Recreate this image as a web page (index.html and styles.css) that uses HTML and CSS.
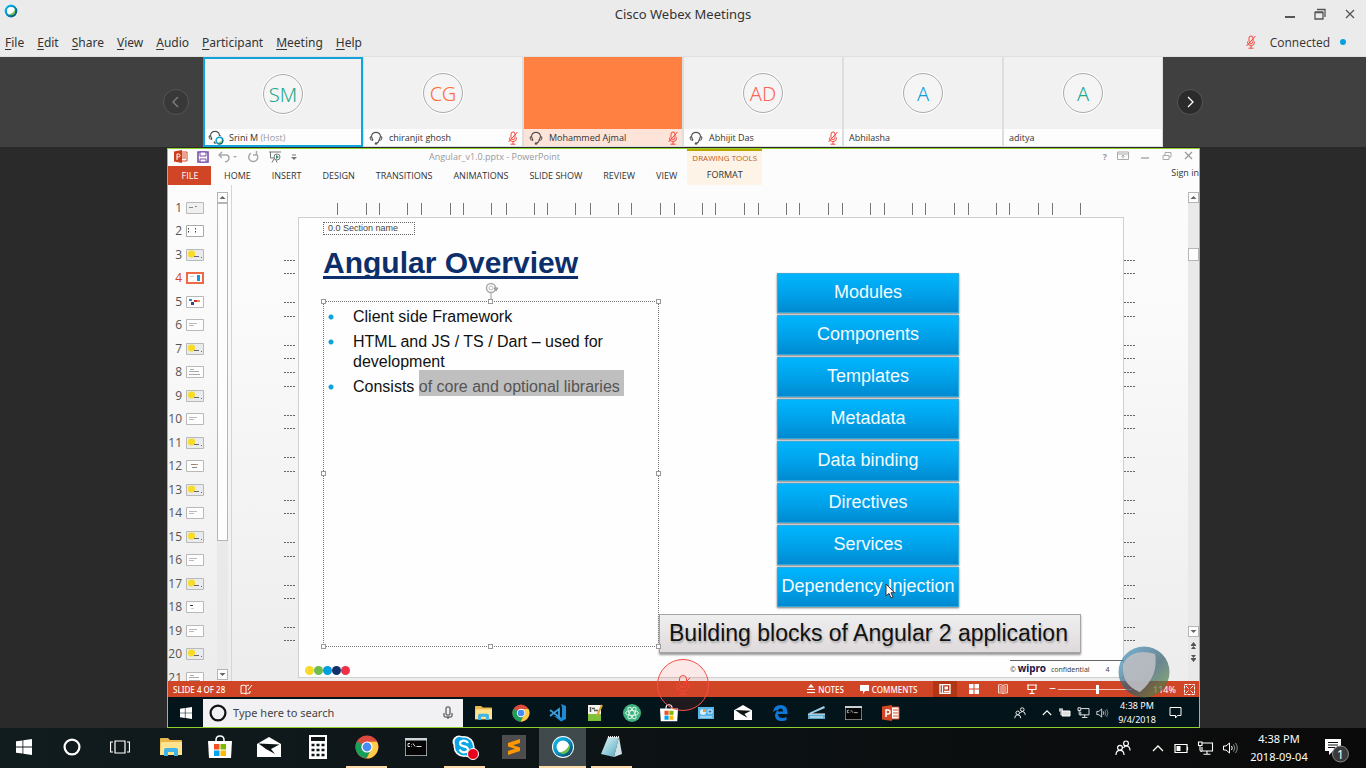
FILE: index.html
```
<!DOCTYPE html>
<html lang="en">
<head>
<meta charset="utf-8">
<title>Cisco Webex Meetings</title>
<link rel="stylesheet" href="styles.css">
</head>
<body>
<svg class="defs" aria-hidden="true">
  <defs>
    <linearGradient id="ring" x1="0" y1="0" x2="1" y2="1"><stop offset="0" stop-color="#0fc3f0"/><stop offset=".5" stop-color="#0a8fc0"/><stop offset="1" stop-color="#063c4c"/></linearGradient>
    <linearGradient id="pad" x1="0" y1="0" x2="1" y2="1"><stop offset="0" stop-color="#e8f8fb"/><stop offset="1" stop-color="#4fa7bd"/></linearGradient>
    <symbol id="webex" viewBox="0 0 24 24"><circle cx="12" cy="12" r="12" fill="#fff"/><circle cx="12" cy="12" r="11" fill="url(#ring)"/><circle cx="12" cy="12" r="7" fill="#fff"/><path d="M18.6 9.5A7 7 0 0 1 8 17.800C14 17 17 14 18.600 9.500z" fill="#6cc04a"/></symbol>
    <symbol id="headset" viewBox="0 0 14 14"><path d="M4 9.500C.5 9.500.5 5.500 2.500 5.500 3 0 11 0 11.500 5.500c2 0 2 4-1.500 4M2.500 5.500l1.500 4M11.500 5.500l-1.500 4q-.5 2-2.500 3" fill="none" stroke="#555" stroke-width="1.100"/><circle cx="7" cy="12.500" r="1.300" fill="#555"/></symbol>
    <symbol id="micoff" viewBox="0 0 12 14"><rect x="4" y="1" width="4" height="7.500" rx="2" fill="none" stroke="currentColor"/><path d="M2.500 6.500v1q0 3 3.500 3t3.500-3v-1M6 10.500V13M3.500 13.200h5M10.500 1 1.500 11" fill="none" stroke="currentColor"/></symbol>
    <symbol id="micthin" viewBox="0 0 18 22"><rect x="5.500" y="1.500" width="7" height="12" rx="3.500" fill="none" stroke="currentColor"/><path d="M3 9v3q0 5 6 5t6-5V9M9 17v3.500M5.500 20.500h7M16 4 2 17" fill="none" stroke="currentColor"/></symbol>
    <symbol id="win" viewBox="0 0 16 16"><path d="M0 2.300 6.500 1.400V7.600H0zM7.300 1.300 16 0v7.600H7.300zM0 8.400h6.500v6.200L0 13.700zM7.300 8.400H16V16l-8.700-1.300z" fill="#fff"/></symbol>
    <symbol id="ring-o" viewBox="0 0 16 16"><circle cx="8" cy="8" r="6.600" fill="none" stroke="currentColor" stroke-width="2"/></symbol>
    <symbol id="folder" viewBox="0 0 22 18"><path d="M0 1q0-1 1-1h7l2 2h11q1 0 1 1v14H0z" fill="#e9b84d"/><path d="M1 4h21v13H0z" fill="#ffe38f"/><path d="M4 18v-6q0-2 2-2h10q2 0 2 2v6h-4v-4H8v4z" fill="#3fb4e8"/></symbol>
    <symbol id="store" viewBox="0 0 24 24"><path d="M8 7V5q0-4 4-4t4 4v2" fill="none" stroke="#fff" stroke-width="1.500"/><path d="M0 6h24l-1 17H1z" fill="#fff"/><path d="M6 9h5.500v5.500H6z" fill="#f25022"/><path d="M12.500 9H18v5.500h-5.500z" fill="#7fba00"/><path d="M6 15.500h5.500V21H6z" fill="#00a4ef"/><path d="M12.500 15.500H18V21h-5.500z" fill="#ffb900"/></symbol>
    <symbol id="mail" viewBox="0 0 24 20"><path d="M0 7 12 0l12 7v13H0z" fill="#fff"/><path d="M1.500 6.500 22.500 7.500 14 12l4 5-9-5z" fill="#0c1416"/></symbol>
    <symbol id="chrome" viewBox="0 0 24 24"><circle cx="12" cy="12" r="11.500" fill="#dd4b3e"/><path d="M2 6.300A11.500 11.500 0 0 0 11 23.500L16.500 14 12 12z" fill="#1a9f5a"/><path d="M11.500 23.500A11.500 11.500 0 0 0 22 6.700H12l4.500 7.300z" fill="#fdcd45"/><circle cx="12" cy="12" r="5.600" fill="#fff"/><circle cx="12" cy="12" r="4.400" fill="#4a8af4"/></symbol>
    <symbol id="cmd" viewBox="0 0 22 18"><path d="M0 0h22v18H0z" fill="#cfd4d6"/><path d="M.7 2.500h20.600v14.800H.700z" fill="#050505"/><path d="M3 5.500h2M3 5.500v3h2M6.500 6v.6M6.500 8v.6M8 5.500l2 3M11.500 8.500h5" stroke="#ddd" fill="none"/></symbol>
    <symbol id="people" viewBox="0 0 16 16"><g fill="none" stroke="#fff" stroke-width="1.200"><circle cx="5" cy="7.800" r="2.400"/><path d="M1 15q0-4.600 4-4.600T9 15"/><circle cx="11" cy="3.400" r="2.400"/><path d="M8.500 8Q9.500 6 11 6q4 0 4 4.500"/></g></symbol>
    <symbol id="up" viewBox="0 0 12 8"><path d="m1 7 5-5 5 5" fill="none" stroke="#fff" stroke-width="1.300"/></symbol>
    <symbol id="net" viewBox="0 0 16 14"><path d="M5 2h10v8H4.500V6M9.500 10v3M6 13.300h7M1 1h3.500v3.500H1zM2.500 4.500V9q0 1.500 2 1.500" fill="none" stroke="#fff" stroke-width="1.100"/></symbol>
    <symbol id="vol" viewBox="0 0 16 14"><path d="M1 5h2.500L7 2v10L3.500 9H1zM9 5q1.500 2 0 4" fill="none" stroke="#fff"/><path d="M11 3.500q2.500 3.500 0 7M13 2q3.500 5 0 10" fill="none" stroke="#8a9093"/></symbol>
    <symbol id="t-line" viewBox="0 0 18 12"><path d="M.5.500h17v11H.500z" fill="#fdfdfd" stroke="#b9b9b9"/><path d="M3 4.500h8M3 6.500h5" stroke="#bbb"/></symbol>
    <symbol id="t-text" viewBox="0 0 18 12"><path d="M.5.500h17v11H.500z" fill="#fdfdfd" stroke="#b9b9b9"/><path d="M4 3.500h4M3 5.500h10M3 8.500h11" stroke="#aaa"/></symbol>
    <symbol id="t-title" viewBox="0 0 18 12"><path d="M.5.500h17v11H.500z" fill="#eef0f1" stroke="#b9b9b9"/><path d="M3 5.500h4M9 4.500h2" stroke="#888"/></symbol>
    <symbol id="t-mid" viewBox="0 0 18 12"><path d="M.5.500h17v11H.500z" fill="#fdfdfd" stroke="#b9b9b9"/><path d="M5 4.500h6M6 7.500h5" stroke="#888"/><path d="M10 4.500h2" stroke="#e8903a"/></symbol>
    <symbol id="t-short" viewBox="0 0 18 12"><path d="M.5.500h17v11H.500z" fill="#fdfdfd" stroke="#b9b9b9"/><path d="M4 4.500h3" stroke="#333"/><path d="M5 7.500h3" stroke="#ccc"/></symbol>
    <symbol id="t-sun" viewBox="0 0 18 12"><path d="M.5.500h17v11H.500z" fill="#e9ebec" stroke="#b9b9b9"/><rect x="2" y="1.500" width="7" height="7" rx="3" fill="#f7dc2b"/><path d="M8 7.500h5M15 8.500h1" stroke="#667"/></symbol>
    <symbol id="t-dots" viewBox="0 0 18 12"><path d="M.5.500h17v11H.500z" fill="#fff" stroke="#aaa"/><path d="M2.500 3v6M9.500 3v6" stroke="#444" stroke-dasharray="1.500 1.500"/></symbol>
    <symbol id="t-blue" viewBox="0 0 18 12"><path d="M1 1h16v10H1z" fill="#fff" stroke="#ed6a47" stroke-width="2"/><path d="M4 4.500h4" stroke="#ccc"/><path d="M11 3h3v6h-3z" fill="#1599dc"/></symbol>
    <symbol id="t-chart" viewBox="0 0 18 12"><path d="M.5.500h17v11H.500z" fill="#fff" stroke="#b9b9b9"/><path d="M3 3h3v2H3z" fill="#2a8ac9"/><path d="M5 6h3v3H5z" fill="#344a80"/><path d="M8 4h3v2H8z" fill="#c33"/><path d="M11 4h3v2h-3z" fill="#e8903a"/></symbol>
    <symbol id="rulerv" viewBox="0 0 12 400"><path d="M0 9.500h12M0 22.500h12M0 51.500h12M0 65.500h12M0 94.500h12M0 107.500h12M0 121.500h12M0 135.500h12M0 164.500h12M0 177.500h12M0 206.500h12M0 220.500h12M0 249.500h12M0 262.500h12M0 291.500h12M0 305.500h12M0 334.500h12M0 347.500h12M0 376.500h12M0 389.500h12" stroke="#666" stroke-dasharray="2 1"/></symbol>
    <symbol id="arr-u" viewBox="0 0 9 9"><path d="M4.500 3 7.500 6h-6z" fill="#666"/></symbol>
    <symbol id="arr-d" viewBox="0 0 9 9"><path d="M4.500 6 7.500 3h-6z" fill="#666"/></symbol>
  </defs>
</svg>

<div class="app">
  <header class="titlebar">
    <svg class="i14"><use href="#webex"/></svg>
    <h1>Cisco Webex Meetings</h1>
    <div class="winbtns">
      <button aria-label="Minimize"><svg width="12" height="12"><path d="M1 9h10" stroke="#555" stroke-width="2"/></svg></button>
      <button aria-label="Restore"><svg width="12" height="12"><path d="M1 4.500h8v6.500H1zM1 4h8M3 1.500h8V9" fill="none" stroke="#555" stroke-width="1.300"/></svg></button>
      <button aria-label="Close"><svg width="12" height="12"><path d="m2 2 8 8m0-8-8 8" stroke="#555" stroke-width="1.300"/></svg></button>
    </div>
  </header>
  <nav class="menubar">
    <button><u>F</u>ile</button><button><u>E</u>dit</button><button><u>S</u>hare</button><button><u>V</u>iew</button><button><u>A</u>udio</button><button><u>P</u>articipant</button><button><u>M</u>eeting</button><button><u>H</u>elp</button>
    <div class="status"><svg class="mic"><use href="#micoff"/></svg><span>Connected</span><i class="dot"></i></div>
  </nav>

  <section class="strip">
    <div class="nav prev"><button class="round off" aria-label="Previous"><svg width="12" height="12"><path d="M8 1 3 6l5 5" fill="none" stroke="#808080" stroke-width="1.300"/></svg></button></div>
    <article class="tile sel"><div class="face"><span class="ava green">SM</span></div><footer><span class="hs"><svg class="i14"><use href="#headset"/></svg><svg class="badge"><use href="#webex"/></svg></span><span>Srini M <em>(Host)</em></span></footer></article>
    <article class="tile"><div class="face"><span class="ava orange">CG</span></div><footer><span class="hs"><svg class="i14"><use href="#headset"/></svg></span><span>chiranjit ghosh</span><svg class="mic"><use href="#micoff"/></svg></footer></article>
    <article class="tile talk"><div class="face"></div><footer><span class="hs"><svg class="i14"><use href="#headset"/></svg></span><span>Mohammed Ajmal</span><svg class="mic"><use href="#micoff"/></svg></footer></article>
    <article class="tile"><div class="face"><span class="ava red">AD</span></div><footer><span class="hs"><svg class="i14"><use href="#headset"/></svg></span><span>Abhijit Das</span><svg class="mic"><use href="#micoff"/></svg></footer></article>
    <article class="tile"><div class="face"><span class="ava blue">A</span></div><footer><span>Abhilasha</span></footer></article>
    <article class="tile"><div class="face"><span class="ava green">A</span></div><footer><span>aditya</span></footer></article>
    <div class="nav next"><button class="round" aria-label="Next"><svg width="12" height="12"><path d="m4 1 5 5-5 5" fill="none" stroke="#fff" stroke-width="1.300"/></svg></button></div>
  </section>

  <main class="stage">
    <div class="share">
      <div class="ppt-head">
        <div class="head-main">
          <div class="ppt-title">
            <div class="quick">
              <svg width="14" height="13"><path d="M6 2h7v9H6z" fill="#fff" stroke="#d24726"/><path d="M8 4h4M8 6h4M8 8h4" stroke="#d24726"/><path d="m0 1.500 8-1.500v13l-8-1.500z" fill="#c93f1e"/><path d="M3 10V4h1.500q1.500 0 1.500 1.500T4.500 7H3" fill="none" stroke="#fff"/></svg>
              <svg width="12" height="12"><path d="M1 1h10v10H1z" fill="none" stroke="#7a4fa8" stroke-width="1.600"/><path d="M3 1h6v4H3zM3 8h6v3H3z" fill="#fff" stroke="#7a4fa8"/></svg>
              <svg width="20" height="12"><path d="M4 1 1 4l3 3M1 4h7q3 0 3 3t-4 4" fill="none" stroke="#aaa" stroke-width="1.500"/><path d="M15 5h4l-2 2z" fill="#aaa"/></svg>
              <svg width="12" height="12"><path d="M9 2.500a4.500 4.500 0 1 1-5-.300M9.500 0v4H6" fill="none" stroke="#aaa" stroke-width="1.500"/></svg>
              <svg width="14" height="12"><path d="M1 1h12M2.500 1v6H6M6 8l-2 3.500M8 9l1 2.500" fill="none" stroke="#777"/><circle cx="9" cy="6" r="3" fill="#fff" stroke="#777"/><path d="m8 4 3 2-3 2z" fill="#2d8f6f"/></svg>
              <svg width="6" height="8"><path d="M1 2h4" stroke="#777"/><path d="M0 4h6L3 7z" fill="#777"/></svg>
            </div>
            <span class="doc">Angular_v1.0.pptx - PowerPoint</span>
          </div>
          <nav class="tabs"><button class="file">FILE</button><button>HOME</button><button>INSERT</button><button>DESIGN</button><button>TRANSITIONS</button><button>ANIMATIONS</button><button>SLIDE SHOW</button><button>REVIEW</button><button>VIEW</button></nav>
        </div>
        <div class="tools"><span>DRAWING TOOLS</span><button>FORMAT</button></div>
        <div class="head-right">
          <div class="ppt-win">
            <b>?</b>
            <svg width="12" height="10"><path d="M.5 1h11v7.500H.500zM1 3h10M6 7.500v-3M4.500 5.500 6 4.200l1.500 1.300" fill="none" stroke="#aaa"/></svg>
            <svg width="12" height="10"><path d="M2 7h8" stroke="#aaa" stroke-width="1.500"/></svg>
            <svg width="12" height="10"><path d="M2 4.500h6V8.500H2zM4 4V1.500h6v4.500H8" fill="none" stroke="#aaa"/></svg>
            <svg width="12" height="10"><path d="m2 1 7 7m0-7L2 8" stroke="#999" stroke-width="1.300"/></svg>
          </div>
          <a class="signin" href="#signin">Sign in</a>
        </div>
      </div>

      <div class="work">
        <ol class="thumbs">
          <li>1<svg><use href="#t-title"/></svg></li><li>2<svg><use href="#t-dots"/></svg></li><li>3<svg><use href="#t-sun"/></svg></li><li class="cur">4<svg><use href="#t-blue"/></svg></li><li>5<svg><use href="#t-chart"/></svg></li><li>6<svg><use href="#t-line"/></svg></li><li>7<svg><use href="#t-sun"/></svg></li><li>8<svg><use href="#t-text"/></svg></li><li>9<svg><use href="#t-sun"/></svg></li><li>10<svg><use href="#t-line"/></svg></li><li>11<svg><use href="#t-sun"/></svg></li><li>12<svg><use href="#t-mid"/></svg></li><li>13<svg><use href="#t-sun"/></svg></li><li>14<svg><use href="#t-line"/></svg></li><li>15<svg><use href="#t-sun"/></svg></li><li>16<svg><use href="#t-line"/></svg></li><li>17<svg><use href="#t-sun"/></svg></li><li>18<svg><use href="#t-short"/></svg></li><li>19<svg><use href="#t-line"/></svg></li><li>20<svg><use href="#t-sun"/></svg></li><li>21<svg><use href="#t-text"/></svg></li>
        </ol>
        <div class="sbar left"><i class="box"><svg><use href="#arr-u"/></svg></i><i class="box thumb"></i><i class="gap"></i><i class="box"><svg><use href="#arr-d"/></svg></i></div>
        <div class="canvas">
          <svg class="rulerh" width="760" height="12"><path d="M5.500 0v12M34.500 0v12M47.500 0v12M75.500 0v12M89.500 0v12M118.500 0v12M131.500 0v12M159.500 0v12M174.500 0v12M202.500 0v12M215.500 0v12M243.500 0v12M258.500 0v12M286.500 0v12M299.500 0v12M328.500 0v12M342.500 0v12M370.500 0v12M383.500 0v12M412.500 0v12M426.500 0v12M454.500 0v12M467.500 0v12M496.500 0v12M510.500 0v12M538.500 0v12M552.500 0v12M580.500 0v12M593.500 0v12M622.500 0v12M636.500 0v12M664.500 0v12M677.500 0v12M706.500 0v12M720.500 0v12M748.500 0v12" stroke="#777"/></svg>
          <div class="board">
            <svg class="rulerv"><use href="#rulerv"/></svg>
            <div class="slide">
              <div class="cols">
                <div class="col-text">
                  <div class="section">0.0 Section name</div>
                  <h2>Angular Overview</h2>
                  <div class="tbox">
                    <svg class="rot" width="14" height="20"><circle cx="7" cy="7" r="4.500" fill="none" stroke="#aaa" stroke-width="1.500"/><circle cx="7" cy="7" r="2" fill="none" stroke="#bbb"/><path d="M10 7h4l-2 3zM7 12v6" fill="#aaa" stroke="#999"/></svg>
                    <i class="h tl"></i><i class="h tc"></i><i class="h tr"></i><i class="h ml"></i><i class="h mr"></i><i class="h bl"></i><i class="h bc"></i><i class="h br"></i>
                    <ul><li>Client side Framework</li><li>HTML and JS / TS / Dart – used for development</li><li>Consists <mark>of core and optional libraries</mark></li></ul>
                  </div>
                </div>
                <div class="col-blocks">
                  <ul class="stack"><li>Modules</li><li>Components</li><li>Templates</li><li>Metadata</li><li>Data binding</li><li>Directives</li><li>Services</li><li>Dependency Injection<svg class="cursor" width="10" height="16"><path d="M1 1v12l3-2.600 2 4.600 2-1-2-4.300h3.500z" fill="#fff" stroke="#333"/></svg></li></ul>
                  <p class="banner">Building blocks of Angular 2 application</p>
                </div>
              </div>
              <div class="foot"><span class="dots"><i class="c1"></i><i class="c2"></i><i class="c3"></i><i class="c4"></i><i class="c5"></i></span><span class="brand">© <b>wipro</b> <span>confidential</span> <span>4</span></span></div>
            </div>
            <svg class="rulerv"><use href="#rulerv"/></svg>
          </div>
        </div>
        <div class="sbar right"><i class="box"><svg><use href="#arr-u"/></svg></i><i class="space"></i><i class="box knob"></i><i class="gap"></i><i class="box"><svg><use href="#arr-d"/></svg></i><svg class="pg" width="9" height="30"><path d="M4.500 4 7 7H2zM4.500 8 7 11H2zM4.500 24 7 21H2zM4.500 20 7 17H2z" fill="#555"/><path d="M2 7.500h5M2 20.500h5" stroke="#555"/></svg></div>
      </div>

      <div class="ppt-status">
        <span class="sl">SLIDE 4 OF 28</span>
        <svg width="13" height="11"><path d="M6 2q-2-1.500-5-.5v8q3-1 5 .5 2-1.500 4-.8V7M6 2v8M6 2q1.500-1 3-.8M12 1 8 6" fill="none" stroke="#fff"/></svg>
        <div class="right">
          <button class="lbl"><svg width="8" height="10"><path d="M0 5.500h8M0 8.500h8" stroke="#fff"/><path d="m4 0 3 3.500H1z" fill="#fff"/></svg>NOTES</button>
          <button class="lbl"><svg width="9" height="10"><path d="M0 1h9v6H5L3 10V7H0z" fill="#fff"/></svg>COMMENTS</button>
          <button class="vw on" aria-label="Normal"><svg width="12" height="10"><path d="M1 .500h10v9H1zM3.500 0v10M5 7.500h6" fill="none" stroke="#fff" stroke-width="1.300"/><path d="M5.500 2.500h3.500v3H5.500z" fill="#fff"/></svg></button>
          <button class="vw" aria-label="Sorter"><svg width="12" height="10"><path d="M1 0h4.500v4.500H1zM6.500 0H11v4.500H6.500zM1 5.500h4.500V10H1zM6.500 5.500H11V10H6.500z" fill="#fff"/></svg></button>
          <button class="vw" aria-label="Reading"><svg width="12" height="10"><path d="M6 1.500Q4 0 1.500.800V9Q4 8.500 6 9.500 8 8.500 10.500 9V.800Q8 0 6 1.500zV9.500M2.500 3H5M2.500 5H5M2.500 7H5M7 3h2.500M7 5h2.500M7 7h2.500" fill="none" stroke="#fbd9cf"/></svg></button>
          <button class="vw" aria-label="Slide show"><svg width="12" height="11"><path d="M1 1h10M2 1v4.500h8V1M6 5.500V9M3.500 9.500h5" fill="none" stroke="#fff" stroke-width="1.200"/></svg></button>
          <span class="zm">−</span><input type="range" aria-label="Zoom" min="10" max="200" value="111"><span class="zm plus">+</span>
          <span class="pct">114%</span>
          <svg class="fit" width="11" height="11"><path d="M.5.500h10v10H.500z" fill="none" stroke="#fff" stroke-dasharray="3 1"/><path d="m2 2 2.500 2.500M9 2 6.500 4.500M2 9l2.500-2.500M9 9 6.500 6.500" stroke="#fff"/></svg>
        </div>
      </div>

      <div class="rtask">
        <button class="rstart" aria-label="Start"><svg width="12" height="12"><use href="#win"/></svg></button>
        <label class="search"><svg width="18" height="18"><use href="#ring-o"/></svg><input type="text" placeholder="Type here to search" aria-label="Search"><svg width="10" height="14"><rect x="3" y="1" width="4" height="8" rx="1" fill="none" stroke="#333"/><path d="M1 7v3q0 1 1 1h6q1 0 1-1V7M5 11v2" fill="none" stroke="#333"/></svg></label>
        <div class="ricons">
          <svg width="17" height="14"><use href="#folder"/></svg>
          <svg width="18" height="18"><use href="#chrome"/></svg>
          <svg viewBox="0 0 18 18" width="18" height="18"><path d="m12 0 5 2v13l-5 2.500L5 12l8 1.500V3z" fill="#1f8ad2"/><path d="m1 6 9 7V5L1 12" fill="none" stroke="#3c9fe0" stroke-width="1.800"/></svg>
          <svg viewBox="0 0 16 18" width="16" height="18"><path d="M1 1h13v16H1z" fill="#f4f6ee"/><path d="M1 10h13v7H1z" fill="#7fc23a"/><path d="M3.500 3v5M5 4.500h3M7 6.500h4" stroke="#555" stroke-width="1.500"/><path d="m15 1-5 11" stroke="#d9a531" stroke-width="2"/></svg>
          <svg viewBox="0 0 18 18" width="18" height="18"><circle cx="9" cy="9" r="9" fill="#3fb27f"/><g fill="none" stroke="#d8f5e6"><ellipse cx="9" cy="9" rx="6.500" ry="2.500"/><ellipse cx="9" cy="9" rx="6.500" ry="2.500" transform="rotate(60 9 9)"/><ellipse cx="9" cy="9" rx="6.500" ry="2.500" transform="rotate(120 9 9)"/></g></svg>
          <svg width="18" height="18"><use href="#store"/></svg>
          <svg viewBox="0 0 16 12" width="16" height="12"><path d="M0 0h16v12H0z" fill="#56b4e8"/><circle cx="5" cy="5" r="3" fill="#d7eefc"/><path d="M5 5V2a3 3 0 0 1 3 3z" fill="#e8923a"/><path d="M10 3h4v3h-4zM2 10h12" fill="#2878b8" stroke="#d7eefc"/></svg>
          <svg width="18" height="15"><use href="#mail"/></svg>
          <svg viewBox="0 0 16 16" width="16" height="16"><path d="M1 7Q2 0 8.500 0q7 0 7 7.500V9H6q0 4 4.500 4 2.500 0 4-1v3Q13 16 10 16 3 16 3 10q0-3 3-5Q3 5 1 7zM6 6.500h5Q11 3.500 8.500 3.500T6 6.500z" fill="#0f78d7"/></svg>
          <svg viewBox="0 0 20 14" width="20" height="14"><path d="M2 7 17 0l1 2L4 8z" fill="#9fd3ea"/><path d="M1 8h17v5H1z" fill="#5da9cc"/><path d="M1 8h17M3 11h13" stroke="#e6f5fb"/></svg>
          <svg width="17" height="14"><use href="#cmd"/></svg>
          <svg viewBox="0 0 18 16" width="18" height="16"><path d="M9 2h8v12H9z" fill="#fff" stroke="#d24726"/><path d="M11 5h5M11 8h5M11 11h5" stroke="#d24726"/><path d="m0 1.500 10-1.500v16L0 14.500z" fill="#d24726"/><path d="M4 12V5h2q2 0 2 2T6 9H4" fill="none" stroke="#fff" stroke-width="1.500"/></svg>
        </div>
        <div class="rtray">
          <svg width="12" height="12"><use href="#people"/></svg><svg class="m" width="10" height="7"><use href="#up"/></svg>
          <svg width="12" height="10"><path d="M3 3h8v5H3z" fill="#ddd" stroke="#fff"/><path d="M0 2h4M1 0v4M3 0v4M2 4v3" stroke="#fff"/></svg>
          <svg width="13" height="11"><use href="#net"/></svg><svg width="13" height="12"><use href="#vol"/></svg>
          <time>4:38 PM<br>9/4/2018</time>
          <svg width="13" height="13"><path d="M1 1.500h11v8H8.500L6.500 12v-2.500H1z" fill="none" stroke="#fff"/></svg>
        </div>
      </div>
    </div>
    <button class="mute" aria-label="Unmute"><svg width="18" height="22"><use href="#micthin"/></svg></button>
    <svg class="ball" viewBox="0 0 52 52"><defs><linearGradient id="bg1" x1="0" y1="0" x2="1" y2="1"><stop offset=".2" stop-color="#3f86ad"/><stop offset=".55" stop-color="#31596a"/><stop offset=".8" stop-color="#4f7d4b"/><stop offset="1" stop-color="#44502f"/></linearGradient></defs><circle cx="26" cy="26" r="25.500" fill="url(#bg1)" fill-opacity=".7"/><path d="M5 18Q14 1 37 8q4 22-15 38Q3 39 5 18z" fill="#bcbec3" fill-opacity=".9"/></svg>
  </main>

  <footer class="taskbar">
    <div class="apps">
      <button class="sys" aria-label="Start"><svg width="16" height="16"><use href="#win"/></svg></button>
      <button class="sys" aria-label="Cortana"><svg width="18" height="18"><use href="#ring-o"/></svg></button>
      <button class="sys" aria-label="Task view"><svg width="20" height="14"><path d="M5 1h10v12H5zM3 2H.500v10H3M17 2h2.500v10H17" fill="none" stroke="#fff" stroke-width="1.200"/></svg></button>
      <button class="first" aria-label="Explorer"><svg width="22" height="18"><use href="#folder"/></svg></button>
      <button aria-label="Store"><svg width="24" height="24"><use href="#store"/></svg></button>
      <button aria-label="Mail"><svg width="24" height="20"><use href="#mail"/></svg></button>
      <button aria-label="Calculator"><svg width="18" height="24"><path d="M0 0h18v24H0z" fill="#fff"/><path d="M2 2h14v4H2z" fill="#0d1416"/><path d="M2.500 10h13M2.500 15h13M2.500 20h13" stroke="#0d1416" stroke-width="2.500" stroke-dasharray="3 2"/></svg></button>
      <button class="run" aria-label="Chrome"><svg width="24" height="24"><use href="#chrome"/></svg></button>
      <button aria-label="Command prompt"><svg width="22" height="18"><use href="#cmd"/></svg></button>
      <button class="run" aria-label="Skype"><svg width="28" height="26"><circle cx="8" cy="8" r="6.500" fill="#fff"/><circle cx="18" cy="17" r="6.500" fill="#fff"/><circle cx="13" cy="12.500" r="10.500" fill="#fff"/><circle cx="8.500" cy="8" r="5" fill="#0aa5e5"/><circle cx="17.500" cy="17" r="5" fill="#0aa5e5"/><circle cx="13" cy="12.500" r="9" fill="#0aa5e5"/><path d="M17 9q-1.500-2.500-4.500-2.300Q9 7 9 9.500q0 2 4 2.800t4 3q0 3-4 3-3 0-4.500-2.800" fill="none" stroke="#fff" stroke-width="2.200"/><circle cx="22" cy="20" r="5.500" fill="#e8001c" stroke="#fff"/></svg></button>
      <button aria-label="Sublime"><svg width="24" height="24"><path d="M0 0h24v24H0z" fill="#4d4d4d"/><path d="m6 8 12-4v4l-7 2.300 7 2.200V16L6 20v-4l7-2.300-7-2.200z" fill="#ff9800"/></svg></button>
      <button class="run act" aria-label="Webex"><svg width="22" height="22"><use href="#webex"/></svg></button>
      <button class="run" aria-label="Notepad"><svg width="24" height="24"><path d="m8 2 11 0-5 20L1 19z" fill="url(#pad)"/><path d="M19 2l3 17-8 3z" fill="#cfe3e6"/><path d="M8 2h11" stroke="#eee" stroke-width="2" stroke-dasharray="1 1"/></svg></button>
    </div>
    <div class="tray">
      <svg width="16" height="16"><use href="#people"/></svg>
      <svg class="up" width="12" height="8"><use href="#up"/></svg>
      <svg width="15" height="11"><path d="M1 1.500h12v8H1zM13.500 4v3" fill="none" stroke="#fff" stroke-width="1.200"/><path d="M2.500 3h4v5h-4z" fill="#fff"/></svg>
      <svg width="17" height="14"><use href="#net"/></svg>
      <svg width="17" height="14"><use href="#vol"/></svg>
      <time>4:38 PM<br>2018-09-04</time>
      <svg class="note" width="26" height="26"><path d="M1 2h16v12H9l-4 4v-4H1z" fill="#fff"/><path d="M4 5.500h10M4 8h10M4 10.500h7" stroke="#111"/><circle cx="16.500" cy="17" r="8" fill="#3a3a3a" stroke="#888"/><text x="16.500" y="21.500" class="n1">1</text></svg>
    </div>
  </footer>
</div>
</body>
</html>
```
FILE: styles.css
```
* { box-sizing: border-box; }
body { margin: 0; font-family: "Noto Sans", "Open Sans", sans-serif; font-size: 12px; color: #333; background: #2a2a2a; overflow: hidden; }
button { font: inherit; color: inherit; background: none; border: 0; padding: 0; margin: 0; }
ul, ol, p, h1, h2 { margin: 0; padding: 0; list-style: none; font-weight: normal; }
svg { display: block; flex: none; }
.defs { position: absolute; width: 0; height: 0; }
.i14 { width: 14px; height: 14px; }

.app { display: flex; flex-direction: column; height: 100vh; }

.titlebar { display: grid; grid-template-columns: 1fr auto 1fr; align-items: center; height: 28px; background: #ebebeb; padding: 0 10px; }
.titlebar .i14 { margin: 0 0 6px -6px; }
.titlebar h1 { font-size: 13px; }
.winbtns { display: flex; justify-content: flex-end; gap: 18px; }
.menubar { display: flex; align-items: center; gap: 13px; height: 29px; padding: 0 20px 0 5px; background: #ebebeb; border-bottom: 1px solid #e0e0e0; }
.menubar u { text-underline-offset: 2px; }
.status { display: flex; align-items: center; gap: 13px; margin-left: auto; font-family: "Open Sans", sans-serif; }
.mic { width: 12px; height: 14px; color: #f0463c; }
.dot { width: 6px; height: 6px; border-radius: 50%; background: #07a0de; margin-left: -3px; }

.strip { display: grid; grid-template-columns: 1fr repeat(6, 160px) 1fr; height: 90px; background: #404040; }
.nav { display: flex; align-items: center; }
.prev { justify-content: flex-end; padding-right: 14px; }
.next { padding-left: 14px; }
.round { display: grid; place-items: center; width: 26px; height: 26px; border-radius: 50%; background: #2b2b2b; border: 1px solid #555; }
.off { background: #383838; }
.tile { display: flex; flex-direction: column; background: #f1f1f1; border: 1px solid #dedede; border-top: 0; }
.sel { border: 2px solid #12a2dc; }
.face { flex: 1; display: grid; place-items: center; }
.ava { display: grid; place-items: center; width: 40px; height: 40px; border: 1px solid #aaa; border-radius: 50%; background: #f5f5f5; box-shadow: 0 0 0 1px #fff; font-size: 20px; font-weight: 300; }
.green { color: #22a88c; } .orange { color: #ff6d35; } .red { color: #ff6257; } .blue { color: #129ddb; }
.tile footer { display: flex; align-items: center; gap: 6px; height: 17px; padding: 0 3px 0 5px; background: #fdfdfd; font-family: "Open Sans", sans-serif; font-size: 9px; }
.sel footer { height: 16px; padding-left: 3px; }
.tile footer em { font-style: normal; color: #999; }
.tile footer .mic { margin-left: auto; }
.hs { position: relative; width: 14px; }
.sel .hs { width: 15px; }
.badge { position: absolute; right: -1px; bottom: -1px; width: 9px; height: 9px; }
.talk .face { background: #ff8040; }
.talk footer { background: #fee3d8; }

.stage { position: relative; flex: 1; min-height: 0; display: grid; grid-template-columns: 167px minmax(0, 1fr) 166px; padding-top: 1px; background: #2a2a2a; }
.share { grid-column: 2; display: flex; flex-direction: column; min-height: 0; border: 1px solid #8fcf2b; background: #fdfcfd; font-size: 9px; overflow: hidden; }

.ppt-head { display: flex; height: 36px; font-family: "Open Sans", sans-serif; }
.head-main { display: flex; flex-direction: column; }
.ppt-title { display: flex; align-items: center; height: 17px; padding-bottom: 2px; }
.quick { display: flex; align-items: center; gap: 9px; padding-left: 6px; width: 261px; }
.doc { color: #999; }
.tabs { display: flex; height: 19px; }
.tabs button { padding: 0 10px 0 11px; }
.tabs .file { width: 43px; margin-right: 2px; background: #d04526; color: #fff; }
.tools { display: flex; flex-direction: column; width: 75px; background: #fdf3e6; border-top: 2px solid #b8a800; text-align: center; }
.tools span { line-height: 13px; color: #bf5a20; white-space: nowrap; font-size: 8px; }
.tools button { height: 21px; }
.head-right { flex: 1; min-width: 0; display: flex; flex-direction: column; align-items: flex-end; }
.ppt-win { display: flex; align-items: center; gap: 10px; height: 14px; padding-right: 4px; color: #999; }
.signin { line-height: 20px; color: #333; text-decoration: none; }

.work { flex: 1; min-height: 0; display: flex; background: linear-gradient(#fdfcfd, #fafafa 25%, #ededed); overflow: hidden; }
.thumbs { width: 49px; padding-top: 11px; overflow: hidden; }
.thumbs li { display: flex; align-items: center; justify-content: flex-end; gap: 4px; height: 23px; padding-right: 13px; font-size: 12px; line-height: 14px; font-family: "Open Sans", sans-serif; color: #555; }
.thumbs li:nth-child(even) { height: 24px; }
.thumbs svg { width: 18px; height: 12px; }
.thumbs .cur { color: #d24726; }
.sbar { display: flex; flex-direction: column; align-items: stretch; width: 11px; margin-top: 7px; background: #e9e9e9; }
.box { display: grid; place-items: center; height: 11px; border: 1px solid #b5b5b5; background: #fdfdfd; }
.box svg { width: 9px; height: 9px; }
.left .thumb { height: 338px; }
.gap { flex: 1; }
.left { margin-bottom: 1px; }
.space { height: 45px; }
.knob { height: 13px; }
.pg { margin: 1px 1px 13px; }
.canvas { flex: 1; min-width: 0; display: flex; flex-direction: column; margin-left: 3px; padding-top: 18px; border-left: 1px solid #d5d5d5; }
.rulerh { margin: 0 0 2px 100px; }
.board { flex: 1; min-height: 0; display: flex; padding: 0 52px 3px 52px; }
.rulerv { width: 12px; height: 400px; margin-top: 34px; }
.rulerv:first-child { margin-right: 2px; }

.slide { flex: 1; min-width: 0; display: flex; flex-direction: column; background: #fefefe; border: 1px solid #cfcfcf; padding-left: 24px; font-family: "Liberation Sans", Arial, sans-serif; }
.cols { flex: 1; min-height: 0; display: grid; grid-template-columns: 336px minmax(0, 1fr); }
.col-text { display: flex; flex-direction: column; padding-top: 4px; margin-bottom: 6px; }
.section { width: 92px; height: 13px; padding-left: 4px; border: 1px dotted #666; line-height: 10px; font-size: 9px; color: #444; }
.slide h2 { margin: 9px 0 19px; line-height: 38px; font-size: 30px; font-weight: bold; color: #0c2f6b; text-decoration: underline; text-decoration-thickness: 3px; text-underline-offset: 3px; text-decoration-skip-ink: none; }
.tbox { position: relative; flex: 1; padding: 5px 0 0 4px; border: 1px dotted #777; font-size: 16px; line-height: 20px; color: #111; }
.tbox ul { display: flex; flex-direction: column; gap: 5px; }
.tbox li { padding-left: 25px; background: radial-gradient(circle at 3px 10px, #0ea2d8 2px, transparent 3px); }
.tbox mark { padding: 8px 4px 1px 0; background: #bfbfbf; color: #555; }
.h { position: absolute; width: 5px; height: 5px; border: 1px solid #999; background: #fff; }
.tl, .tc, .tr { top: -3px; } .ml, .mr { top: 50%; margin-top: -3px; } .bl, .bc, .br { bottom: -3px; }
.tl, .ml, .bl { left: -3px; } .tc, .bc { left: 50%; margin-left: -3px; } .tr, .mr, .br { right: -3px; }
.rot { position: absolute; left: 50%; top: -21px; margin-left: -7px; }
.col-blocks { display: flex; flex-direction: column; padding-top: 55px; }
.stack { display: flex; flex-direction: column; gap: 2px; width: 182px; margin-left: 118px; }
.stack li { position: relative; height: 40px; background: linear-gradient(#00b6fe, #009ee6 60%, #008ad0); border: 1px solid #35a8dc; box-shadow: 0 1px 2px #777; color: #f4fcff; font-size: 18px; line-height: 36px; text-align: center; white-space: nowrap; }
.cursor { position: absolute; left: 107px; top: 15px; }
.banner { width: 422px; height: 39px; margin-top: 7px; padding-left: 9px; border: 1px solid #a5a5a5; background: linear-gradient(#efeff0, #dfdadc); box-shadow: 0 2px 2px #999; font-size: 23px; line-height: 37px; color: #111; text-shadow: 1px 2px 2px #aaa; white-space: nowrap; }
.foot { display: flex; justify-content: space-between; align-items: flex-end; height: 30px; margin-left: -18px; }
.dots { display: flex; padding-bottom: 2px; }
.dots i { width: 9px; height: 9px; border-radius: 50%; }
.c1 { background: #f8d92c; } .c2 { background: #6dbd4c; } .c3 { background: #00a0e0; } .c4 { background: #12306a; } .c5 { background: #ee3048; }
.brand { width: 113px; border-top: 1px solid #666; font: 7px/15px "Noto Sans", sans-serif; color: #444; white-space: nowrap; }
.brand b { font-size: 10px; color: #1a1448; }
.brand span { margin-left: 3px; }
.brand span:last-child { margin-left: 14px; }

.ppt-status { display: flex; align-items: center; height: 16px; padding-left: 5px; background: #d04526; color: #fff; }
.ppt-status .sl { width: 67px; font-size: 8px; font-weight: 500; white-space: nowrap; }
.ppt-status .right { display: flex; align-items: center; height: 100%; margin-left: auto; padding-right: 4px; font-size: 8px; }
.lbl { display: flex; align-items: center; gap: 3px; margin-right: 16px; font-weight: 500; }
.vw { display: grid; place-items: center; width: 24px; height: 100%; margin-right: 5px; }
.on { background: #b23516; }
.zm { font-size: 12px; line-height: 14px; }
.plus { margin-right: 11px; }
.pct { margin-right: 8px; font-size: 9px; }
.ppt-status input { appearance: none; width: 74px; height: 9px; margin: 0 3px 0 2px; background: linear-gradient(#f3c3b6, #f3c3b6) center / 100% 1px no-repeat; }
.ppt-status input::-webkit-slider-thumb { appearance: none; width: 3px; height: 9px; background: #fff; }

.rtask { display: flex; align-items: center; height: 30px; padding-top: 1px; background: #03141a; color: #fff; }
.rstart { display: grid; place-items: center; width: 35px; }
.search { display: flex; align-items: center; gap: 6px; width: 260px; height: 28px; padding: 0 10px 0 6px; background: #f1f1f3; color: #111; }
.search input { flex: 1; min-width: 0; padding: 0; border: 0; background: none; font: 11px "Noto Sans", sans-serif; }
.search input::placeholder { color: #444; opacity: 1; }
.ricons { display: grid; grid-template-columns: repeat(12, 37px); place-items: center; margin-left: 2px; }
.rtray { display: flex; align-items: center; gap: 6px; margin-left: auto; padding-right: 17px; }
.rtray .m { margin: 0 1px 0 10px; }
.rtray time { width: 44px; text-align: center; font-size: 9px; line-height: 14px; }
.rtray time + svg { margin-left: 4px; }

.mute { position: absolute; left: 50%; bottom: 17px; display: grid; place-items: center; width: 52px; height: 52px; margin-left: -26px; border: 1px solid #f4504a; border-radius: 50%; background: rgba(240, 70, 60, .12); color: #f4453c; }
.ball { position: absolute; right: 196px; bottom: 30px; width: 52px; height: 52px; }

.taskbar { display: flex; justify-content: space-between; height: 40px; background: linear-gradient(90deg, #111c1f, #0c1214 50%, #0b0a0a); color: #fff; }
.apps { display: flex; }
.apps button { display: grid; place-items: center; width: 49px; border-bottom: 2px solid transparent; }
.apps .sys { width: 48px; }
.apps .first { margin-left: 2px; }
.apps .run { width: 41px; margin: 0 4px; border-color: #fcd9a8; }
.apps .act { width: 47px; margin: 0 1px; background: #40494c; }
.tray { display: flex; align-items: center; gap: 8px; padding-right: 16px; }
.tray .up { margin: 0 2px 0 13px; }
.tray time { width: 64px; margin-right: 5px; text-align: center; font-size: 11px; line-height: 18px; white-space: nowrap; }
.note { margin-top: 4px; }
.n1 { font: 12px "Noto Sans", sans-serif; fill: #fff; text-anchor: middle; }
```
